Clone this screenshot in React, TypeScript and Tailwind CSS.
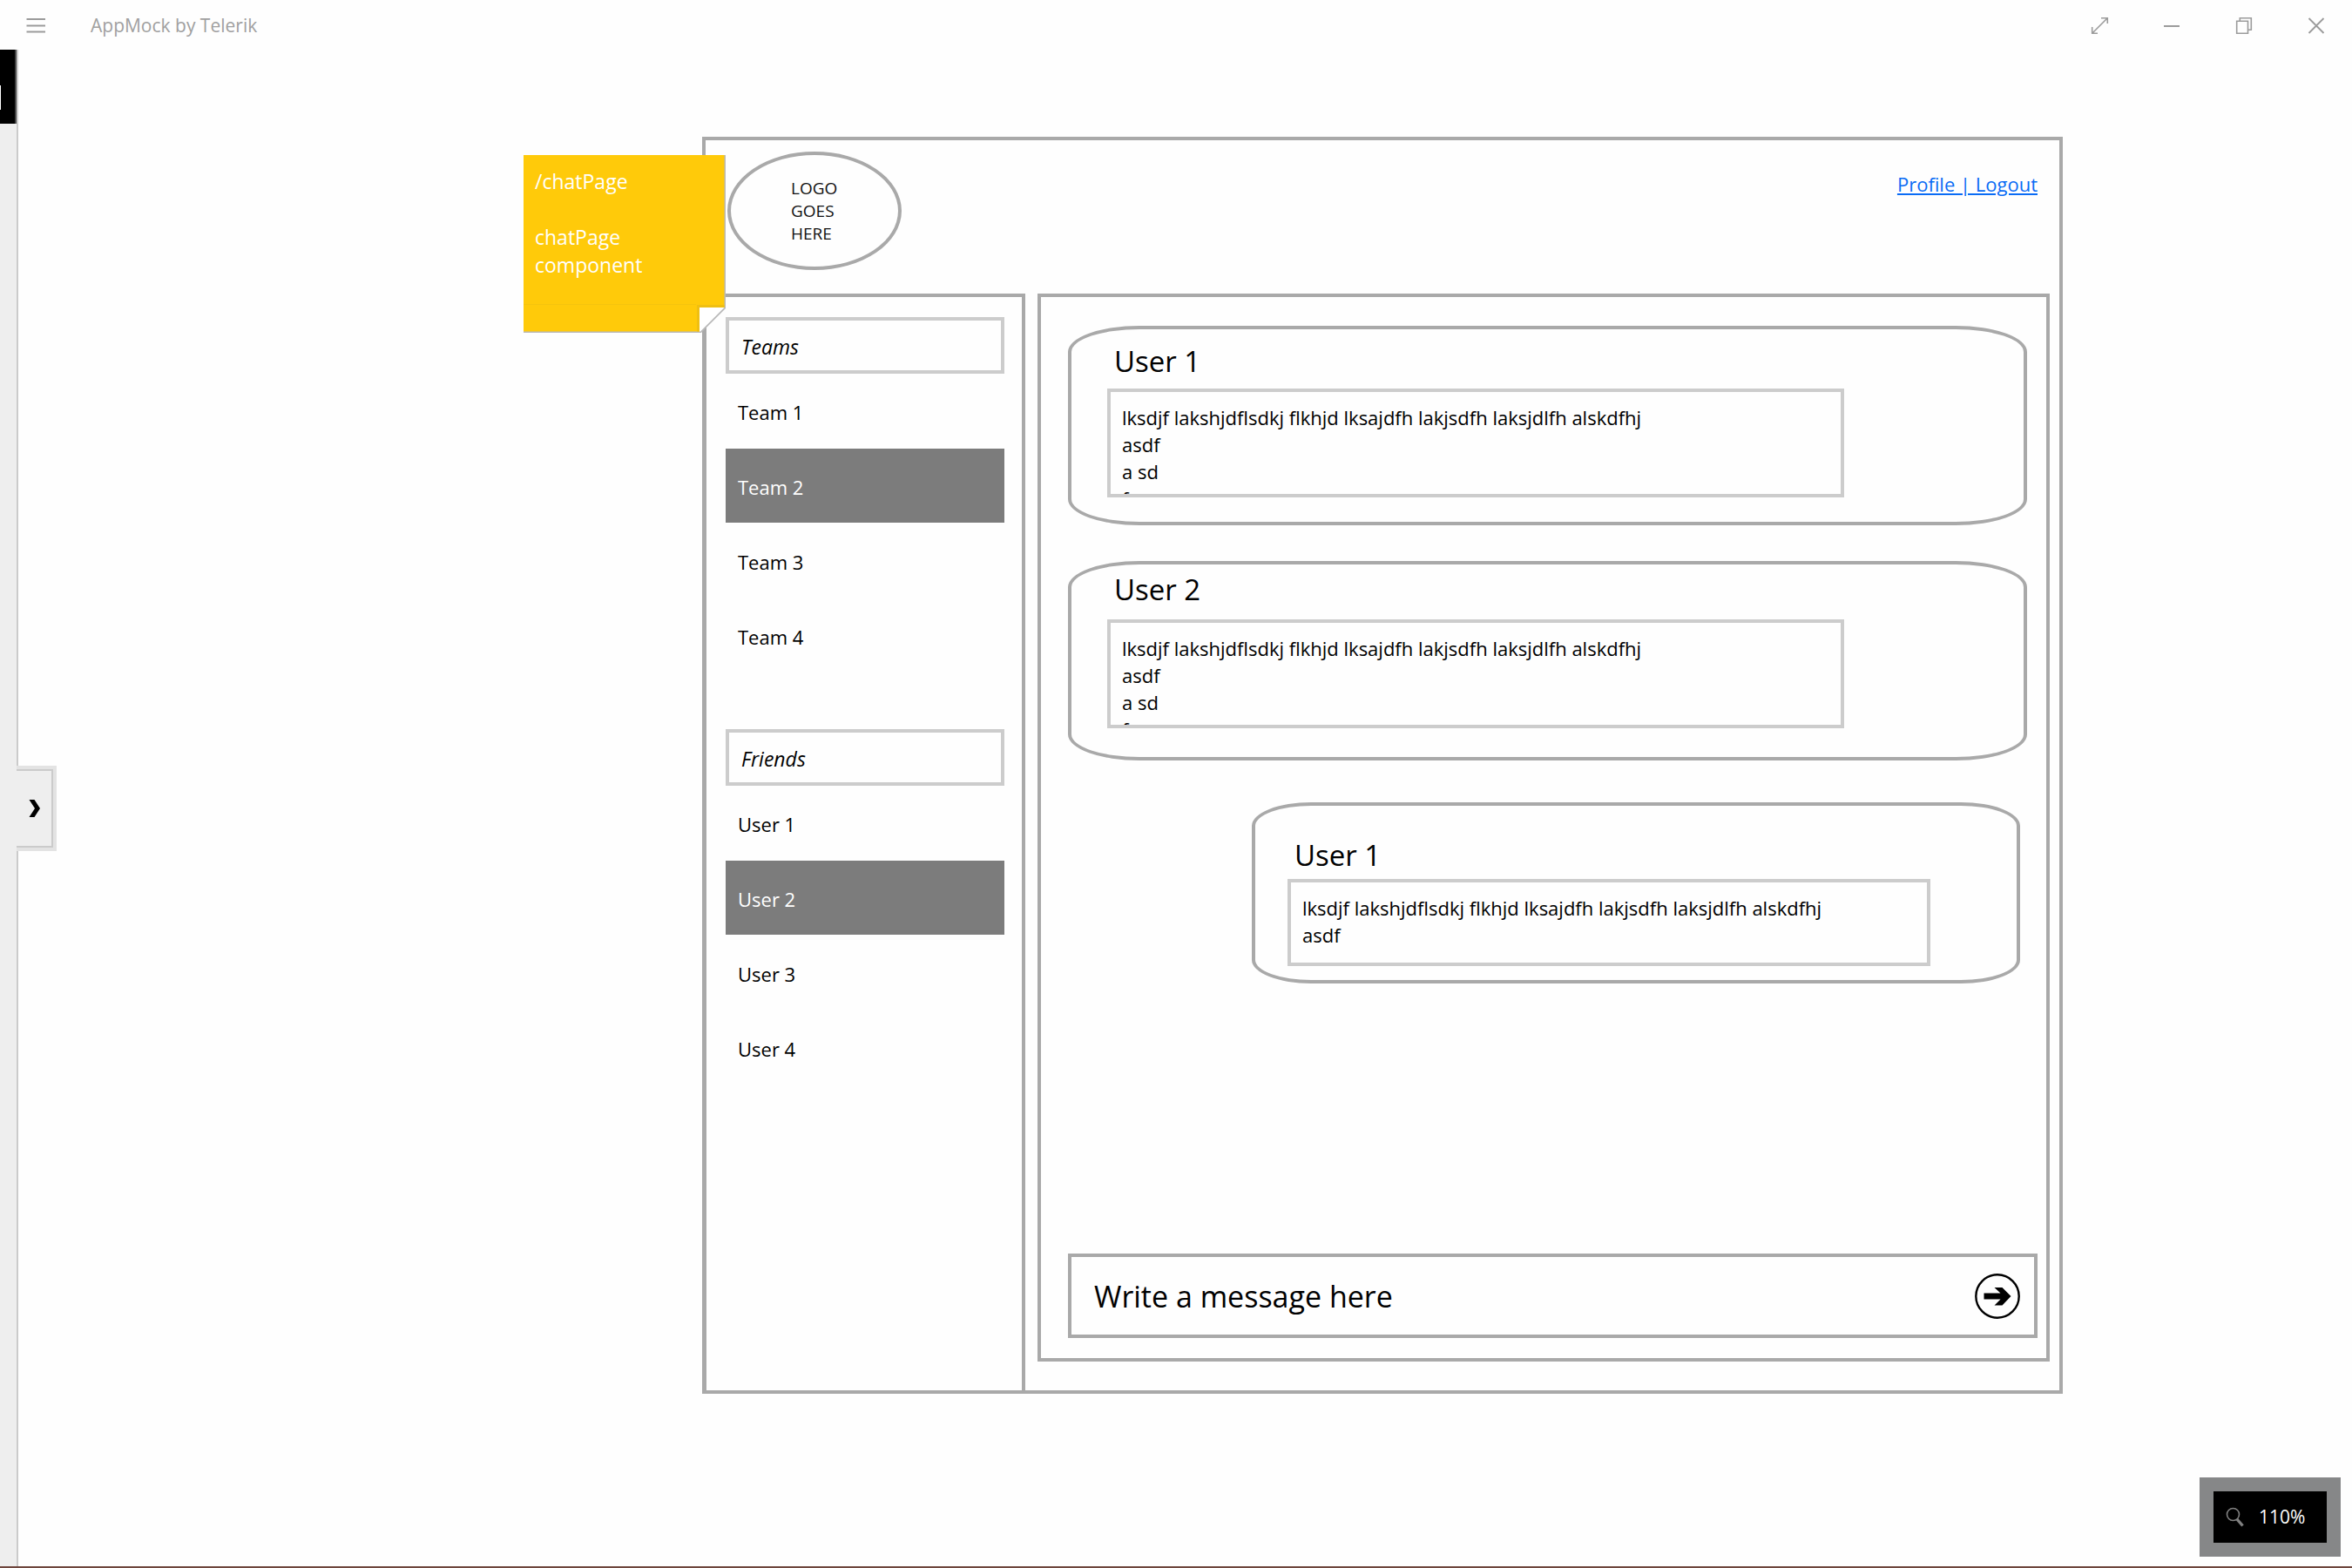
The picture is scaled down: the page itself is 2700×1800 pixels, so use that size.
import React from "react";

type Entry = { name: string; selected?: boolean };

const teams: Entry[] = [
  { name: "Team 1" },
  { name: "Team 2", selected: true },
  { name: "Team 3" },
  { name: "Team 4" },
];

const friends: Entry[] = [
  { name: "User 1" },
  { name: "User 2", selected: true },
  { name: "User 3" },
  { name: "User 4" },
];

const longText = "lksdjf lakshjdflsdkj flkhjd lksajdfh lakjsdfh laksjdlfh alskdfhj";

const messages = [
  {
    user: "User 1",
    lines: [longText, "asdf", "a sd", "f"],
    bubble: "h-[229px] rounded-[82px/30px] pt-[17px] pl-[41px] mr-[12px]",
    box: "mt-[11px] h-[125px] mr-[206px]",
  },
  {
    user: "User 2",
    lines: [longText, "asdf", "a sd", "f"],
    bubble: "mt-[41px] h-[229px] rounded-[82px/30px] pt-[9px] pl-[41px] mr-[12px]",
    box: "mt-[14px] h-[125px] mr-[206px]",
  },
  {
    user: "User 1",
    lines: [longText, "asdf"],
    bubble: "mt-[48px] h-[208px] rounded-[68px/27px] pt-[37px] pl-[37px] ml-[211px] mr-[20px]",
    box: "mt-[7px] h-[100px] mr-[99px]",
  },
];

function TitleBar() {
  return (
    <header className="flex h-[57px] shrink-0 items-center pl-[30px] pr-[21px] text-[#9b9b9b]">
      <button type="button" aria-label="Menu" className="h-[22px] w-[22px]">
        <svg viewBox="0 0 22 22" className="h-[22px] w-[22px]" stroke="currentColor" strokeWidth="2">
          <path d="M0.500 4H22M0.500 11.500H22M0.500 18.500H22" />
        </svg>
      </button>
      <h1 className="ml-[52px] flex-1 text-[21px] leading-[28px] text-[#a0a0a0]">AppMock by Telerik</h1>
      <div className="flex gap-[43px]">
        <button type="button" aria-label="Full screen" className="h-10 w-10">
          <svg viewBox="0 0 40 40" className="h-10 w-10" fill="none" stroke="currentColor" strokeWidth="1.600">
            <path d="M12 29L29 12M22 11.700H29.300V18M11.700 22V29.300H18" />
          </svg>
        </button>
        <button type="button" aria-label="Minimize" className="h-10 w-10">
          <svg viewBox="0 0 40 40" className="h-10 w-10" fill="none" stroke="currentColor" strokeWidth="2">
            <path d="M11 21H29" />
          </svg>
        </button>
        <button type="button" aria-label="Restore" className="h-10 w-10">
          <svg viewBox="0 0 40 40" className="h-10 w-10" fill="none" stroke="currentColor" strokeWidth="1.600">
            <path d="M11.700 15.300H24.500V29.200H11.700ZM15.300 15V11.700H28.300V25.300H25" />
          </svg>
        </button>
        <button type="button" aria-label="Close" className="h-10 w-10">
          <svg viewBox="0 0 40 40" className="h-10 w-10" fill="none" stroke="currentColor" strokeWidth="1.800">
            <path d="M11.500 12L28.500 29M28.500 12L11.500 29" />
          </svg>
        </button>
      </div>
    </header>
  );
}

function Rail() {
  return (
    <aside className="relative w-[21px] shrink-0 border-r-2 border-[#cbcbcb] bg-[#eeeeee]">
      <div className="h-[85px] border-r-2 border-[#444444] bg-black pt-[41px]">
        <div className="h-[28px] w-px bg-white" />
      </div>
      <button
        type="button"
        aria-label="Expand panel"
        className="absolute left-[19px] top-[822px] h-[98px] w-[46px] border-y-4 border-r-4 border-[#e3e3e3]"
      >
        <span className="flex h-full items-center border-y-2 border-r-2 border-[#cbcbcb] bg-[#eeeeee] pl-[14px]">
          <svg viewBox="0 0 14 22" className="h-[22px] w-[14px]">
            <path d="M0.500 1H6.500L13 11L6.500 21H0.500L7 11Z" />
          </svg>
        </span>
      </button>
    </aside>
  );
}

function Note() {
  return (
    <div className="absolute -left-[209px] top-[17px] h-[204px] w-[232px] whitespace-pre-line pl-[13px] pt-[14px] text-[23px] leading-[32px] text-white">
      <svg viewBox="0 0 232 204" className="absolute inset-0 h-full w-full">
        <path d="M0 0H232V176L204 204H0Z" fill="#b9b9b9" />
        <path d="M0 0H230.500V175H202V202.500H0Z" fill="#ffca0a" />
        <path d="M0 171.500H198" fill="none" stroke="#f5c40e" strokeWidth="1" />
        <path d="M199 172H230.500V175H202V202.500H199Z" fill="#efbf12" />
        <path d="M202 175H230.500L203 202.500H202Z" fill="#fff" />
      </svg>
      <p className="relative">{"/chatPage\n\nchatPage\ncomponent"}</p>
    </div>
  );
}

function Group({ title, entries }: { title: string; entries: Entry[] }) {
  return (
    <section>
      <h2 className="flex h-[65px] items-center border-4 border-[#cccccc] pl-[14px] pt-[3px] text-[23px] italic">
        {title}
      </h2>
      <ul className="flex flex-col gap-px">
        {entries.map((e) => (
          <li key={e.name}>
            <button
              type="button"
              className={
                e.selected
                  ? "flex h-[85px] w-full items-center bg-[#7c7c7c] pl-[14px] pt-[3px] text-white"
                  : "flex h-[85px] w-full items-center pl-[14px] pt-[3px]"
              }
            >
              {e.name}
            </button>
          </li>
        ))}
      </ul>
    </section>
  );
}

function Chat() {
  return (
    <main className="mb-[33px] ml-[14px] mr-[11px] flex flex-1 flex-col border-4 border-[#a9a9a9] pb-[23px] pl-[31px] pr-[10px] pt-[33px]">
      {messages.map((m, i) => (
        <article key={i} className={"border-4 border-[#a9a9a9] " + m.bubble}>
          <h3 className="pl-[8px] text-[33px] leading-[40px]">{m.user}</h3>
          <div className={"overflow-hidden border-4 border-[#cccccc] pl-[13px] pt-[14px] " + m.box}>
            {m.lines.map((line) => (
              <p key={line} className="whitespace-nowrap">
                {line}
              </p>
            ))}
          </div>
        </article>
      ))}
      <form className="mt-auto flex h-[97px] items-center border-4 border-[#a9a9a9] pl-[26px] pr-[16px]">
        <input
          type="text"
          aria-label="Message"
          placeholder="Write a message here"
          className="min-w-0 flex-1 text-[34px] leading-[44px] outline-none placeholder:text-black"
        />
        <button type="button" aria-label="Send" className="h-[52px] w-[52px]">
          <svg viewBox="0 0 52 52" className="h-[52px] w-[52px]">
            <circle cx="26" cy="26" r="24.700" fill="none" stroke="#000" strokeWidth="2.400" />
            <path d="M10.500 22.500H29.500L22.500 16H31.500L41.500 26L31.500 36.500H22.500L29.500 29.500H10.500Z" />
          </svg>
        </button>
      </form>
    </main>
  );
}

export default function App() {
  return (
    <div className="relative flex min-h-screen flex-col border-b-2 border-[#6e463d] bg-[#fefefe] font-['Open_Sans','Noto_Sans',sans-serif] text-[22px] leading-[31px] text-black">
      <TitleBar />
      <div className="flex flex-1">
        <Rail />
        <div className="grid flex-1 grid-cols-[785fr_1562fr_332fr] pb-[198px] pt-[100px]">
          <div className="relative col-start-2 flex flex-col border-4 border-[#a9a9a9]">
            <header className="flex h-[176px] items-start justify-between pl-[25px] pr-[25px] pt-[13px]">
              <div className="flex h-[136px] w-[200px] items-center rounded-[50%] border-4 border-[#a9a9a9] pl-[69px] text-[19px] leading-[26px] text-[#111111]">
                <p className="w-[60px]">LOGO GOES HERE</p>
              </div>
              <a href="#profile" className="mt-[22px] text-[#0a6cf5] underline">
                Profile | Logout
              </a>
            </header>
            <div className="flex flex-1">
              <nav className="flex w-[367px] shrink-0 flex-col gap-[65px] border-l border-r-4 border-t-4 border-[#a9a9a9] pl-[22px] pr-[20px] pt-[23px]">
                <Group title="Teams" entries={teams} />
                <Group title="Friends" entries={friends} />
              </nav>
              <Chat />
            </div>
            <Note />
          </div>
        </div>
      </div>
      <div className="absolute bottom-[11px] right-[13px] border-[16px] border-[#868788] bg-black">
        <button type="button" className="flex h-[59px] w-[130px] items-center pl-[14px] text-[21px] text-white">
          <svg viewBox="0 0 22 24" className="mr-[16px] h-[24px] w-[22px]" fill="none" stroke="#808080">
            <circle cx="8.500" cy="8.500" r="7" strokeWidth="1.600" />
            <path d="M13 14L19.500 21.500" strokeWidth="3.400" />
          </svg>
          110%
        </button>
      </div>
    </div>
  );
}
